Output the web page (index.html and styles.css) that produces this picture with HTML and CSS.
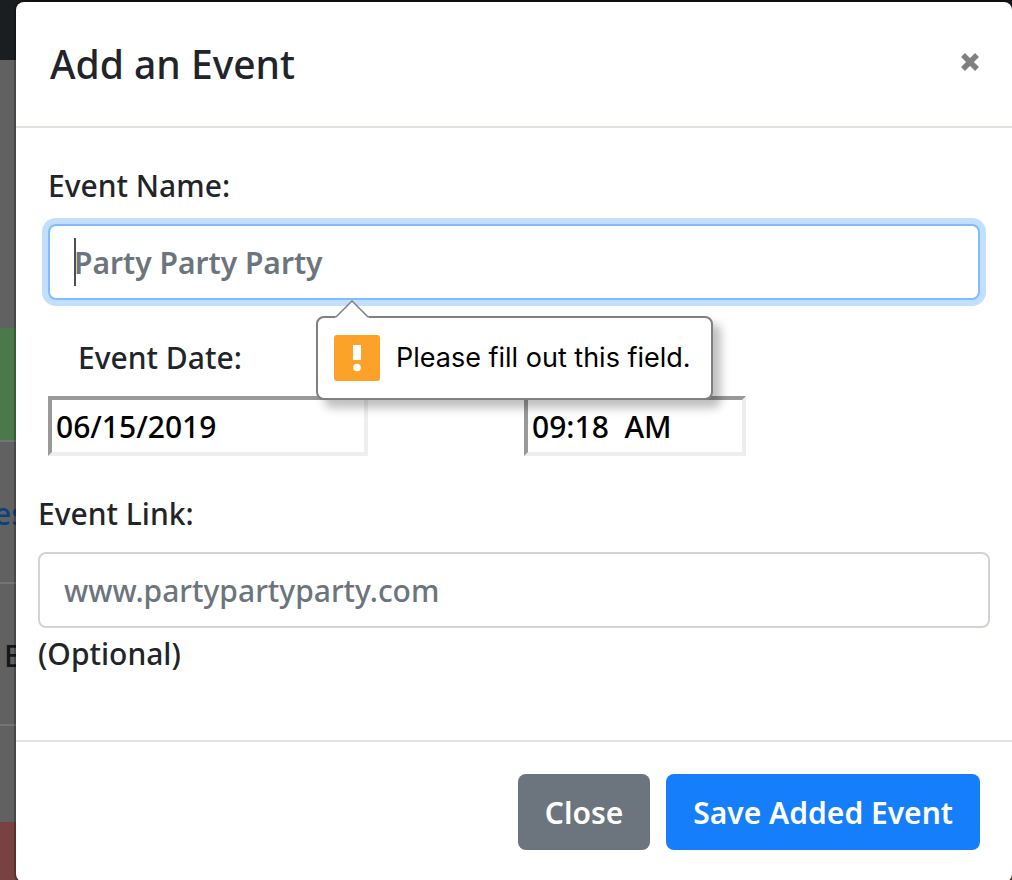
FILE: index.html
```html
<!DOCTYPE html>
<html lang="en">
<head>
<meta charset="utf-8">
<meta name="viewport" content="width=device-width, initial-scale=1">
<title>Add an Event</title>
<link rel="stylesheet" href="styles.css">
</head>
<body>
<div class="stage">
  <div class="page" aria-hidden="true">
    <div class="page-nav"></div>
    <div class="page-gap"></div>
    <div class="page-row page-row-green"></div>
    <div class="page-row page-row-link"><span class="page-link">es</span></div>
    <div class="page-row page-row-text">E</div>
    <div class="page-tail"></div>
    <div class="page-red"></div>
  </div>
  <div class="modal" role="dialog" aria-labelledby="modal-title">
    <header class="modal-header">
      <h1 class="modal-title" id="modal-title">Add an Event</h1>
      <button class="dismiss" type="button" aria-label="Dismiss">
        <svg width="20" height="20" viewBox="0 0 20 20" aria-hidden="true"><path d="M3 3 17 17M17 3 3 17" stroke="currentColor" stroke-width="5.500"/></svg>
      </button>
    </header>
    <form class="modal-form">
      <div class="modal-body">
        <div class="field">
          <label class="label" for="event-name">Event Name:</label>
          <div class="input-wrap">
            <input class="input input-focused" id="event-name" type="text" placeholder="Party Party Party" aria-describedby="name-error">
            <span class="caret"></span>
            <div class="tooltip" id="name-error" role="alert">
              <svg class="tooltip-arrow" width="34" height="18" viewBox="0 0 34 18" aria-hidden="true"><path d="M0 18 1 17 17 1 33 17 34 18Z" fill="#fff"/><path d="M1 17 17 1 33 17" fill="none" stroke="#808080" stroke-width="1.5"/></svg>
              <svg width="46" height="46" viewBox="0 0 46 46" aria-hidden="true"><rect width="46" height="46" rx="3" fill="#fda229"/><path d="M19 10h8v15h-8z" fill="#fff"/><circle cx="23" cy="32.500" r="3.800" fill="#fff"/></svg>
              <span>Please fill out this field.</span>
            </div>
          </div>
        </div>
        <div class="field-row">
          <div class="field">
            <label class="label label-indent" for="event-date">Event Date:</label>
            <input class="picker" id="event-date" type="text" value="06/15/2019">
          </div>
          <div class="field">
            <input class="picker" type="text" value="09:18  AM" aria-label="Event Time">
          </div>
        </div>
        <div class="field field-wide">
          <label class="label" for="event-link">Event Link:</label>
          <input class="input" id="event-link" type="text" placeholder="www.partypartyparty.com" aria-describedby="link-note">
          <span class="note" id="link-note">(Optional)</span>
        </div>
      </div>
      <footer class="modal-footer">
        <button class="btn btn-secondary" type="button">Close</button>
        <button class="btn btn-primary" type="submit">Save Added Event</button>
      </footer>
    </form>
  </div>
</div>
</body>
</html>
```
FILE: styles.css
```css
* {
  box-sizing: border-box;
}

body {
  margin: 0;
  overflow: hidden;
  background: #616161;
  color: #212529;
  font: 500 30px/48px "Noto Sans", sans-serif;
}

.stage {
  display: grid;
  min-height: 100vh;
}

.page,
.modal {
  grid-area: 1 / 1;
}

.page {
  display: flex;
  flex-direction: column;
}

.page-nav {
  height: 60px;
  background: linear-gradient(90deg, #1a1e21 16px, #17131a 32px);
}

.page-gap {
  height: 268px;
}

.page-row {
  height: 142px;
  border-top: 2px solid #747474;
}

.page-row-green {
  height: 112px;
  border: 0;
  background: #4b794b;
}

.page-row-link {
  padding-top: 48px;
}

.page-link {
  margin-left: -6px;
  color: #0c4180;
}

.page-row-text {
  padding: 48px 0 0 4px;
  color: #151719;
}

.page-tail {
  height: 98px;
  border-top: 2px solid #747474;
}

.page-red {
  flex: 1;
  background: #784242;
}

.modal {
  align-self: start;
  margin: 2px 0 0 16px;
  border-radius: 8px;
  background: #fff;
  box-shadow: 0 0 0 2px rgba(0, 0, 0, 0.25);
}

.modal-header {
  display: flex;
  align-items: flex-start;
  justify-content: space-between;
  padding: 32px 32px 32px 34px;
  border-bottom: 2px solid #dee2e6;
}

.modal-title {
  margin: 0;
  font-size: 39px;
  font-weight: 500;
  line-height: 60px;
}

.dismiss {
  display: flex;
  margin-top: 18px;
  padding: 0;
  border: 0;
  background: none;
  color: #808080;
}

.modal-form {
  margin: 0;
}

.modal-body {
  display: flex;
  flex-direction: column;
  gap: 34px;
  padding: 34px 32px 62px;
}

.field {
  display: flex;
  flex-direction: column;
}

.field-row {
  display: grid;
  grid-template-columns: 320px 222px;
  align-items: end;
  gap: 156px;
}

.field-wide {
  margin: 0 -10px;
}

.label {
  margin-bottom: 14px;
}

.label-indent {
  padding-left: 30px;
}

.note {
  padding-top: 2px;
}

.input-wrap {
  position: relative;
}

.input {
  display: block;
  width: 100%;
  height: 76px;
  padding: 12px 24px;
  border: 2px solid #ced4da;
  border-radius: 8px;
  background: #fff;
  color: #495057;
  font: inherit;
  outline: 0;
}

.input::placeholder {
  color: #6c757d;
  opacity: 1;
}

.input-focused {
  border-color: #80bdff;
  box-shadow: 0 0 0 6px #c2dfff;
}

.input-focused::placeholder {
  font-weight: 600;
}

.caret {
  position: absolute;
  top: 14px;
  left: 26px;
  width: 2px;
  height: 48px;
  background: #495057;
}

.tooltip {
  position: absolute;
  z-index: 1;
  top: 92px;
  left: 268px;
  display: flex;
  align-items: center;
  gap: 16px;
  padding: 16px 20px 16px 16px;
  border: 2px solid #808080;
  border-radius: 8px;
  background: #fff;
  box-shadow: 8px 8px 10px rgba(0, 0, 0, 0.25);
  color: #000;
  font: 400 27px/48px Inter, sans-serif;
  white-space: nowrap;
}

.tooltip-arrow {
  position: absolute;
  top: -18px;
  left: 17px;
}

.picker {
  width: 100%;
  height: 60px;
  padding: 2px 4px;
  border: 4px solid;
  border-color: #999 #eee #eee #999;
  border-radius: 0;
  background: #fff;
  color: #000;
  font: inherit;
}

.modal-footer {
  display: flex;
  justify-content: flex-end;
  gap: 16px;
  padding: 32px;
  border-top: 2px solid #dee2e6;
}

.btn {
  padding: 15px 27px 13px;
  border: 0;
  border-radius: 8px;
  color: #fff;
  font: inherit;
  font-weight: 600;
}

.btn-secondary {
  background: #6c757d;
}

.btn-primary {
  background: #157efb;
}
```
